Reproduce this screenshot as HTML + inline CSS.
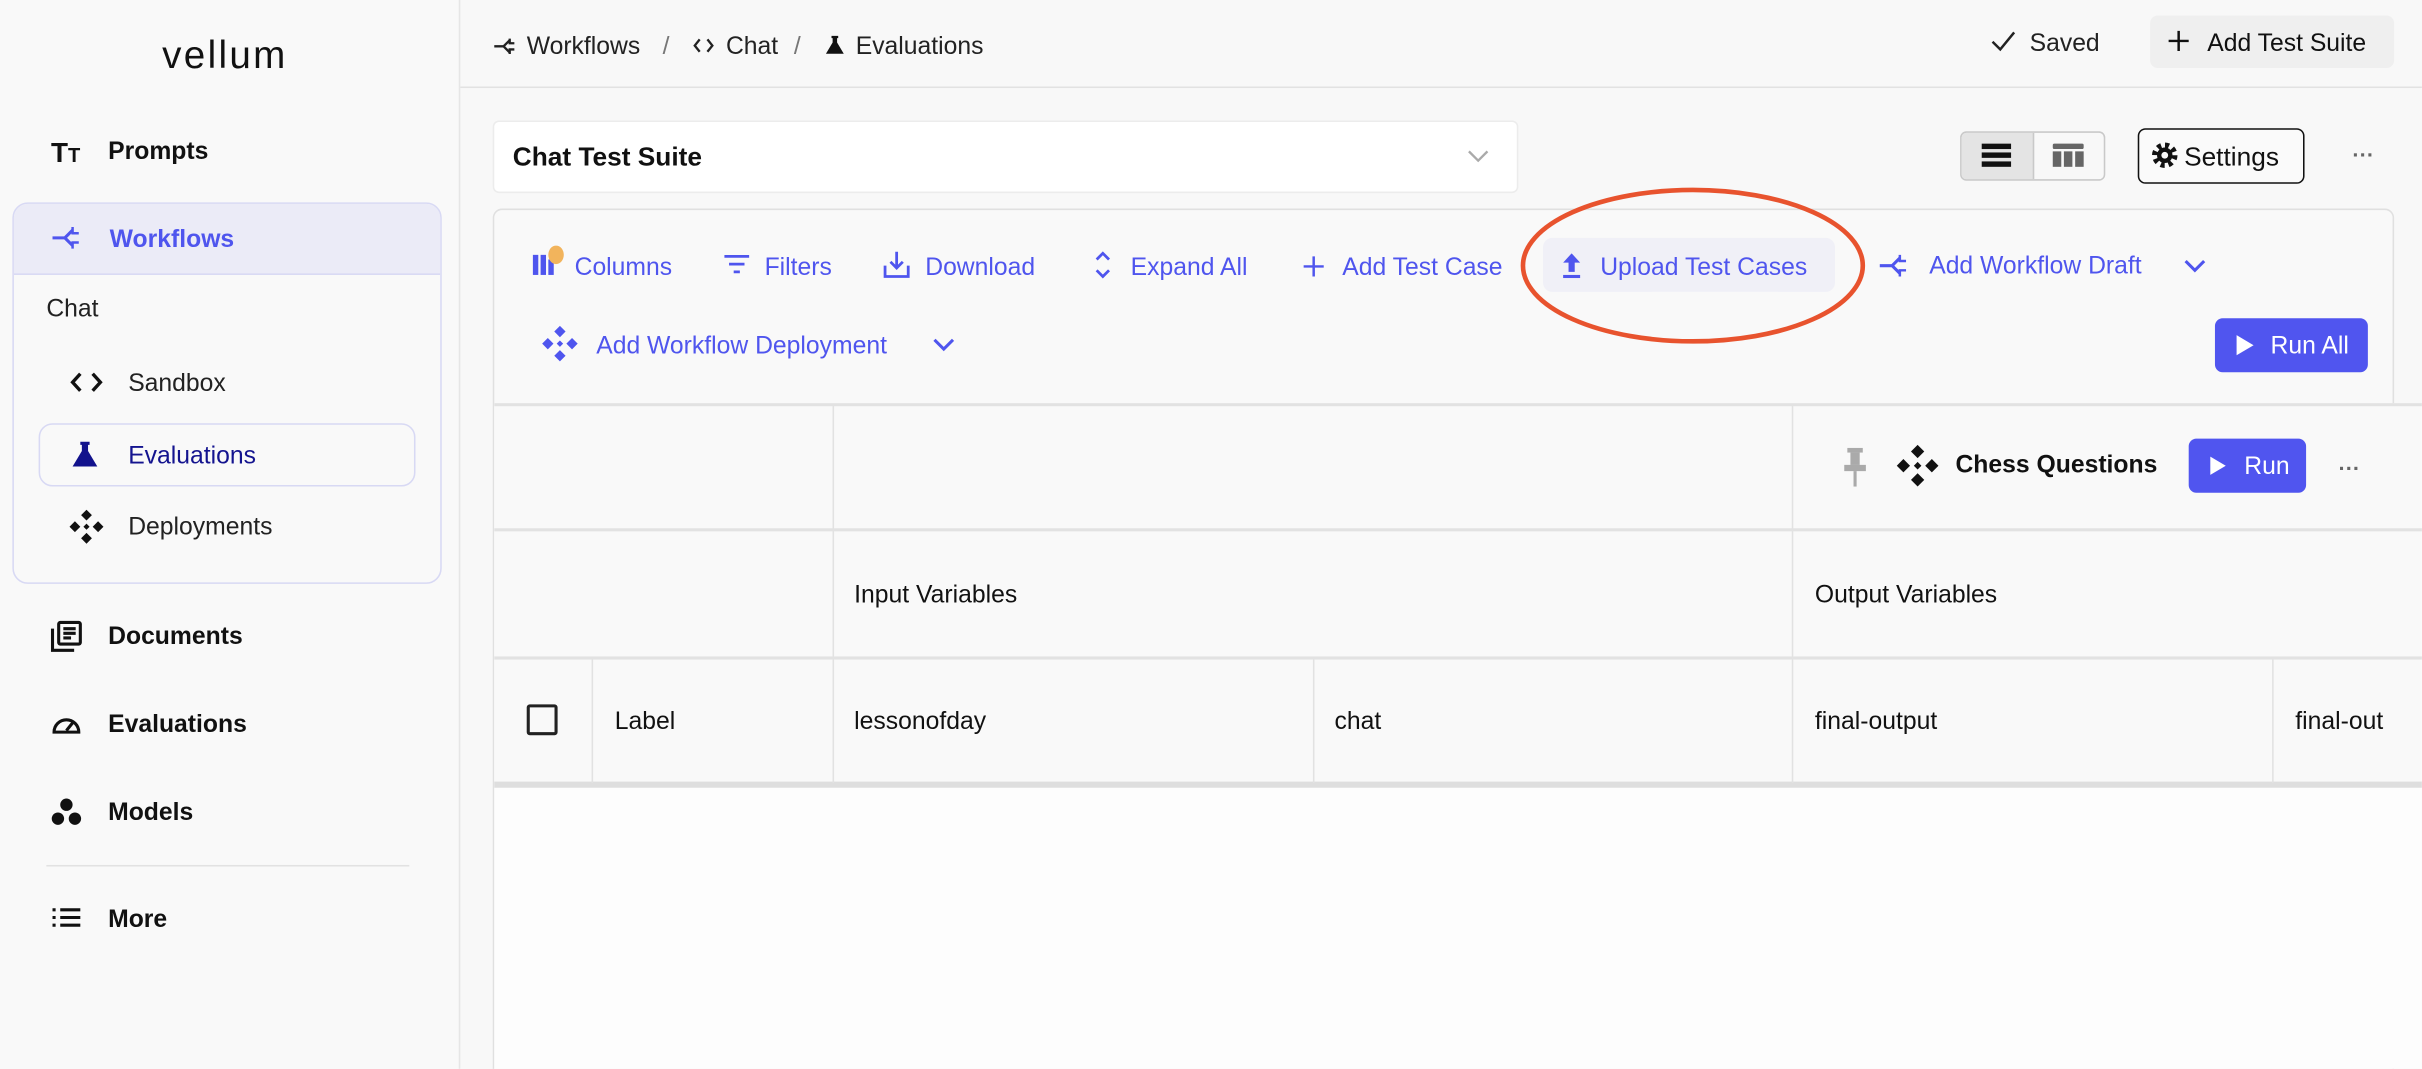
<!DOCTYPE html>
<html><head><meta charset="utf-8"><style>
html,body{margin:0;padding:0;width:2422px;height:1068px;overflow:hidden;background:#f9f9f9}
#w{position:absolute;left:0;top:0;width:1568px;height:692px;overflow:hidden;transform:scale(1.5446);transform-origin:0 0;font-family:"Liberation Sans",sans-serif;color:#111;background:#f8f8f8}
.a{position:absolute}
.t{position:absolute;white-space:nowrap;font-size:16px;line-height:20px;padding-top:2px}
.b{font-weight:bold}
.blue{color:#4f55ee}
.vl{position:absolute;width:1px;background:#e2e2e2}
.hl{position:absolute;height:1px;background:#e2e2e2}
svg{position:absolute;overflow:visible}
</style></head><body><div id="w">
<!-- sidebar -->
<div class="a" style="left:0;top:0;width:297px;height:692px;background:#f9f9f9;border-right:1px solid #e6e6e6"></div>
<div class="t" style="left:105px;top:19px;font-size:25px;line-height:30px;letter-spacing:1.5px">vellum</div>
<div class="t b" style="left:33px;top:87px;font-size:18px">T<span style="font-size:13px">T</span></div>
<div class="t b" style="left:70px;top:87px">Prompts</div>
<div class="a" style="left:8px;top:131px;width:276px;height:245px;border:1px solid #d8d9f4;border-radius:10px;overflow:hidden">
 <div class="a" style="left:0;top:0;width:276px;height:45px;background:#ebebf7;border-bottom:1px solid #d8d9f4"></div>
</div>
<svg style="left:33px;top:145px" width="22" height="18" viewBox="0 0 22 18" fill="none" stroke="#4f55ee" stroke-width="2"><path d="M1 9h8l5-5M9 9l5 5"/><path d="M14 2v4h4M14 16v-4h4" stroke-width="1.6"/></svg>
<div class="t b blue" style="left:71px;top:144px">Workflows</div>
<div class="t" style="left:30px;top:189px;color:#222">Chat</div>
<svg style="left:46px;top:241px" width="20" height="13" viewBox="0 0 20 13" fill="none" stroke="#111" stroke-width="2.2"><path d="M6 1L1 6.5 6 12M14 1l5 5.5-5 5.5"/></svg>
<div class="t" style="left:83px;top:237px;color:#222">Sandbox</div>
<div class="a" style="left:25px;top:274px;width:242px;height:39px;border:1px solid #d8d9f4;border-radius:9px"></div>
<svg style="left:46px;top:285px" width="18" height="18" viewBox="0 0 18 18"><path d="M6 1h6v2h-1v4l6 10H1l6-10V3H6z" fill="#12128c"/></svg>
<div class="t" style="left:83px;top:284px;color:#14148f">Evaluations</div>
<svg style="left:45px;top:330px" width="22" height="22" viewBox="0 0 22 22" fill="#111"><path d="M11 0l3.5 3.5-3.5 3.5-3.5-3.5zM11 15l3.5 3.5-3.5 3.5-3.5-3.5zM0 11l3.5-3.5 3.5 3.5-3.5 3.5zM15 11l3.5-3.5 3.5 3.5-3.5 3.5zM11 9l2 2-2 2-2-2z"/></svg>
<div class="t" style="left:83px;top:330px;color:#222">Deployments</div>
<svg style="left:33px;top:402px" width="20" height="20" viewBox="0 0 20 20" fill="none" stroke="#111" stroke-width="2"><rect x="5" y="1" width="14" height="14" rx="1"/><path d="M1 5v14h14M8 5h8M8 8h8M8 11h5"/></svg>
<div class="t b" style="left:70px;top:401px">Documents</div>
<svg style="left:33px;top:459px" width="20" height="18" viewBox="0 0 20 18" fill="none" stroke="#111" stroke-width="2"><path d="M2 15a8 8 0 1 1 16 0zM10 14l4-5"/></svg>
<div class="t b" style="left:70px;top:458px">Evaluations</div>
<svg style="left:33px;top:516px" width="20" height="19" viewBox="0 0 20 19" fill="#111"><circle cx="10" cy="5" r="4"/><circle cx="4.5" cy="14" r="4"/><circle cx="15.5" cy="14" r="4"/></svg>
<div class="t b" style="left:70px;top:515px">Models</div>
<div class="hl" style="left:30px;top:560px;width:235px"></div>
<svg style="left:34px;top:587px" width="18" height="14" viewBox="0 0 18 14" stroke="#111" stroke-width="2"><path d="M0 2h2M5 2h13M0 7h2M5 7h13M0 12h2M5 12h13"/></svg>
<div class="t b" style="left:70px;top:584px">More</div>

<!-- top bar -->
<div class="hl" style="left:298px;top:56px;width:1270px"></div>
<svg style="left:320px;top:24px" width="14" height="12" viewBox="0 0 14 12" fill="none" stroke="#222" stroke-width="1.5"><path d="M0 6h6l4-4M6 6l4 4M10 1v3h3M10 11V8h3"/></svg>
<div class="t" style="left:341px;top:19px;color:#222">Workflows</div>
<div class="t" style="left:429px;top:19px;color:#777">/</div>
<svg style="left:449px;top:25px" width="13" height="9" viewBox="0 0 13 9" fill="none" stroke="#222" stroke-width="1.5"><path d="M4 0.5L0.8 4.5 4 8.5M9 0.5l3.2 4-3.2 4"/></svg>
<div class="t" style="left:470px;top:19px;color:#222">Chat</div>
<div class="t" style="left:514px;top:19px;color:#777">/</div>
<svg style="left:534px;top:22px" width="13" height="14" viewBox="0 0 18 18"><path d="M6 1h6v2h-1v4l6 10H1l6-10V3H6z" fill="#111"/></svg>
<div class="t" style="left:554px;top:19px;color:#222">Evaluations</div>
<svg style="left:1289px;top:20px" width="16" height="14" viewBox="0 0 16 14" fill="none" stroke="#222" stroke-width="1.6"><path d="M1 7l5 5L15 1"/></svg>
<div class="t" style="left:1314px;top:17px;color:#222">Saved</div>
<div class="a" style="left:1392px;top:10px;width:158px;height:34px;background:#efefef;border-radius:5px"></div>
<svg style="left:1404px;top:20px" width="13" height="13" viewBox="0 0 13 13" stroke="#111" stroke-width="1.6"><path d="M6.5 0v13M0 6.5h13"/></svg>
<div class="t" style="left:1429px;top:17px">Add Test Suite</div>

<!-- suite select -->
<div class="a" style="left:319px;top:78px;width:662px;height:45px;background:#fff;border:1px solid #ececec;border-radius:4px"></div>
<div class="t b" style="left:332px;top:90px;font-size:17px">Chat Test Suite</div>
<svg style="left:950px;top:97px" width="14" height="8" viewBox="0 0 14 8" fill="none" stroke="#aaa" stroke-width="1.5"><path d="M1 1l6 6 6-6"/></svg>
<div class="a" style="left:1269px;top:85px;width:92px;height:30px;border:1px solid #c9c9c9;border-radius:4px;overflow:hidden;background:#f8f8f8"><div class="a" style="left:0;top:0;width:46px;height:30px;background:#e4e4e4;border-right:1px solid #c9c9c9"></div></div>
<svg style="left:1283px;top:93px" width="19" height="15" viewBox="0 0 19 15" fill="#111"><rect y="0" width="19" height="3.5"/><rect y="5.7" width="19" height="3.5"/><rect y="11.5" width="19" height="3.5"/></svg>
<svg style="left:1329px;top:93px" width="20" height="15" viewBox="0 0 20 15" fill="#666"><rect width="20" height="3.5" rx="1"/><rect y="5" width="5.5" height="10"/><rect x="7.2" y="5" width="5.5" height="10"/><rect x="14.5" y="5" width="5.5" height="10"/></svg>
<div class="a" style="left:1384px;top:83px;width:106px;height:34px;border:1.5px solid #111;border-radius:5px;background:#fafafa"></div>
<svg style="left:1393px;top:92px" width="17" height="17" viewBox="0 0 17 17"><circle cx="8.5" cy="8.5" r="6.5" fill="none" stroke="#111" stroke-width="3.5" stroke-dasharray="2.6 2.5"/><circle cx="8.5" cy="8.5" r="5" fill="#111"/><circle cx="8.5" cy="8.5" r="2.2" fill="#fafafa"/></svg>
<div class="t" style="left:1414px;top:90px;font-size:17px">Settings</div>
<div class="t b" style="left:1523px;top:88px;color:#666;font-size:14px">···</div>

<!-- panel -->
<div class="a" style="left:319px;top:135px;width:1229px;height:580px;border:1px solid #e0e0e0;border-radius:6px;background:#f9f9f9"></div>
<!-- toolbar -->
<svg style="left:345px;top:165px" width="14" height="13" viewBox="0 0 14 13" fill="#4f55ee"><rect width="3.5" height="13"/><rect x="5" width="3.5" height="13"/><rect x="10" y="3" width="3.5" height="10"/></svg>
<div class="a" style="left:355px;top:159px;width:10px;height:12px;border-radius:50%;background:#f2b45c"></div>
<div class="t blue" style="left:372px;top:162px">Columns</div>
<svg style="left:469px;top:165px" width="16" height="12" viewBox="0 0 16 12" stroke="#4f55ee" stroke-width="1.8"><path d="M0 1h16M3 6h10M6 11h4"/></svg>
<div class="t blue" style="left:495px;top:162px">Filters</div>
<svg style="left:572px;top:163px" width="17" height="17" viewBox="0 0 17 17" fill="none" stroke="#4f55ee" stroke-width="1.8"><path d="M8.5 0v10M4.5 6.5l4 4 4-4M1 9v7h15V9"/></svg>
<div class="t blue" style="left:599px;top:162px">Download</div>
<svg style="left:709px;top:163px" width="10" height="17" viewBox="0 0 10 17" fill="none" stroke="#4f55ee" stroke-width="1.8"><path d="M1 5l4-4 4 4M1 12l4 4 4-4"/></svg>
<div class="t blue" style="left:732px;top:162px">Expand All</div>
<svg style="left:844px;top:166px" width="13" height="13" viewBox="0 0 13 13" stroke="#4f55ee" stroke-width="1.6"><path d="M6.5 0v13M0 6.5h13"/></svg>
<div class="t blue" style="left:869px;top:162px">Add Test Case</div>
<div class="a" style="left:999px;top:154px;width:189px;height:35px;background:#f0f0f7;border-radius:6px"></div>
<svg style="left:1011px;top:164px" width="13" height="16" viewBox="0 0 13 16" fill="#4f55ee"><path d="M6.5 0L12 6H8.5v6h-4V6H1z"/><rect x="1" y="14" width="11" height="2"/></svg>
<div class="t blue" style="left:1036px;top:162px">Upload Test Cases</div>
<svg style="left:1216px;top:163px" width="22" height="18" viewBox="0 0 22 18" fill="none" stroke="#4f55ee" stroke-width="2"><path d="M1 9h8l5-5M9 9l5 5"/><path d="M14 2v4h4M14 16v-4h4" stroke-width="1.6"/></svg>
<div class="t blue" style="left:1249px;top:161px">Add Workflow Draft</div>
<svg style="left:1414px;top:168px" width="14" height="8" viewBox="0 0 14 8" fill="none" stroke="#4f55ee" stroke-width="2"><path d="M1 1l6 6 6-6"/></svg>
<svg style="left:351px;top:211px" width="23" height="23" viewBox="0 0 22 22" fill="#4f55ee"><path d="M11 0l3.5 3.5-3.5 3.5-3.5-3.5zM11 15l3.5 3.5-3.5 3.5-3.5-3.5zM0 11l3.5-3.5 3.5 3.5-3.5 3.5zM15 11l3.5-3.5 3.5 3.5-3.5 3.5zM11 9l2 2-2 2-2-2z"/></svg>
<div class="t blue" style="left:386px;top:213px">Add Workflow Deployment</div>
<svg style="left:604px;top:219px" width="14" height="8" viewBox="0 0 14 8" fill="none" stroke="#4f55ee" stroke-width="2"><path d="M1 1l6 6 6-6"/></svg>
<div class="a" style="left:1434px;top:206px;width:99px;height:35px;background:#5055ef;border-radius:5px"></div>
<svg style="left:1448px;top:217px" width="11" height="13" viewBox="0 0 11 13" fill="#fff"><path d="M0 0l11 6.5L0 13z"/></svg>
<div class="t" style="left:1470px;top:213px;color:#fff">Run All</div>
<!-- oval -->
<svg style="left:0;top:0" width="1568" height="692"><ellipse cx="1096" cy="172" rx="110" ry="49" fill="none" stroke="#e8532e" stroke-width="3"/></svg>

<!-- table -->
<div class="a" style="left:320px;top:261px;width:1248px;height:431px;background:#fdfdfd"></div>
<div class="a" style="left:320px;top:261px;width:1248px;height:246px;background:#f9f9f9"></div>
<div class="hl" style="left:320px;top:261px;width:1248px;height:2px"></div>
<div class="hl" style="left:320px;top:342px;width:1248px;height:2px"></div>
<div class="hl" style="left:320px;top:425px;width:1248px;height:2px"></div>
<div class="hl" style="left:320px;top:506px;width:1248px;height:4px;background:#dedede"></div>
<div class="vl" style="left:539px;top:262px;height:245px"></div>
<div class="vl" style="left:1160px;top:262px;height:245px"></div>
<div class="vl" style="left:383px;top:426px;height:81px"></div>
<div class="vl" style="left:850px;top:426px;height:81px"></div>
<div class="vl" style="left:1471px;top:426px;height:81px"></div>
<svg style="left:1192px;top:290px" width="18" height="26" viewBox="0 0 18 26" fill="#aaa"><rect x="4" y="0" width="10" height="3"/><rect x="6" y="3" width="6" height="8"/><path d="M2 11h14v4H2z"/><rect x="8" y="15" width="2" height="10"/></svg>
<svg style="left:1228px;top:288px" width="27" height="27" viewBox="0 0 22 22" fill="#111"><path d="M11 0l3.5 3.5-3.5 3.5-3.5-3.5zM11 15l3.5 3.5-3.5 3.5-3.5-3.5zM0 11l3.5-3.5 3.5 3.5-3.5 3.5zM15 11l3.5-3.5 3.5 3.5-3.5 3.5zM11 9l2 2-2 2-2-2z"/></svg>
<div class="t b" style="left:1266px;top:290px">Chess Questions</div>
<div class="a" style="left:1417px;top:284px;width:76px;height:35px;background:#5055ef;border-radius:5px"></div>
<svg style="left:1431px;top:295px" width="10" height="13" viewBox="0 0 11 13" fill="#fff"><path d="M0 0l11 6.5L0 13z"/></svg>
<div class="t" style="left:1453px;top:291px;color:#fff">Run</div>
<div class="t b" style="left:1514px;top:291px;color:#666;font-size:14px">···</div>
<div class="t" style="left:553px;top:374px">Input Variables</div>
<div class="t" style="left:1175px;top:374px">Output Variables</div>
<div class="a" style="left:341px;top:456px;width:20px;height:20px;border:2px solid #222;border-radius:2px;box-sizing:border-box"></div>
<div class="t" style="left:398px;top:456px">Label</div>
<div class="t" style="left:553px;top:456px">lessonofday</div>
<div class="t" style="left:864px;top:456px">chat</div>
<div class="t" style="left:1175px;top:456px">final-output</div>
<div class="t" style="left:1486px;top:456px">final-out</div>
</div></body></html>
